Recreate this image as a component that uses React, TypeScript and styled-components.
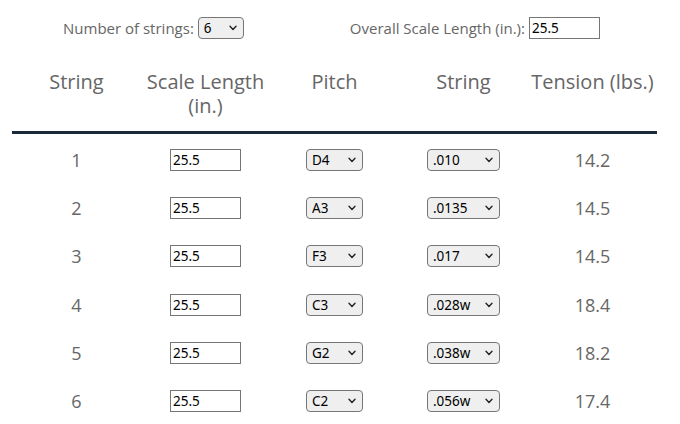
import React, { useState } from "react";
import styled, { createGlobalStyle } from "styled-components";

const Global = createGlobalStyle`
  html, body { margin: 0; padding: 0; background: #fff; }
  body { font-family: "Open Sans", "Noto Sans", sans-serif; color: #555; }
`;

const Page = styled.div`
  width: 680px;
  height: 424px;
  overflow: hidden;
  padding-top: 16px;
  box-sizing: border-box;
`;

const Controls = styled.div`
  display: flex;
  align-items: center;
  height: 24px;
  padding-left: 63px;
`;

const Field = styled.label<{ $gap?: number }>`
  display: flex;
  align-items: center;
  gap: 4px;
  font-size: 15px;
  color: #666;
  margin-right: ${(p) => p.$gap ?? 0}px;
`;

const SelectWrap = styled.span<{ $w: number }>`
  position: relative;
  display: inline-flex;
  width: ${(p) => p.$w}px;
  height: 22px;
`;

const NativeSelect = styled.select`
  appearance: none;
  -webkit-appearance: none;
  width: 100%;
  height: 100%;
  font-family: "Noto Sans", "Open Sans", sans-serif;
  font-size: 13.5px;
  color: #000;
  background: #efefef;
  border: 1px solid #767676;
  border-radius: 4px;
  padding: 0 0 0 5px;
  box-sizing: border-box;
  outline: none;
`;

const Chevron = styled.svg`
  position: absolute;
  right: 7px;
  top: 8px;
  width: 8px;
  height: 6px;
  pointer-events: none;
`;

const TextInput = styled.input<{ $w: number }>`
  width: ${(p) => p.$w}px;
  height: 22px;
  font-family: "Noto Sans", "Open Sans", sans-serif;
  font-size: 13.5px;
  color: #000;
  border: 1px solid #767676;
  border-radius: 0;
  padding: 0 2px;
  box-sizing: border-box;
  background: #fff;
  outline: none;
`;

const Table = styled.div`
  margin: 30px 0 0 12px;
  width: 645px;
`;

const HeadRow = styled.div`
  display: grid;
  grid-template-columns: repeat(5, 129px);
  border-bottom: 3px solid #1b2a3b;
  padding-bottom: 13px;
`;

const HeadCell = styled.div`
  text-align: center;
  font-size: 20px;
  line-height: 24px;
  color: #666;
`;

const Body = styled.div`
  padding-top: 2px;
`;

const Row = styled.div`
  display: grid;
  grid-template-columns: repeat(5, 129px);
  height: 48.2px;
  align-items: center;
  justify-items: center;
`;

const Num = styled.div`
  font-size: 18px;
  color: #666;
`;

function Dropdown({ w, value, options }: { w: number; value: string; options: string[] }) {
  return (
    <SelectWrap $w={w}>
      <NativeSelect defaultValue={value}>
        {options.map((o) => (
          <option key={o}>{o}</option>
        ))}
      </NativeSelect>
      <Chevron viewBox="0 0 8 6">
        <path d="M1 1.2 L4 4.4 L7 1.2" fill="none" stroke="#222" strokeWidth="1.4" strokeLinecap="round" strokeLinejoin="round" />
      </Chevron>
    </SelectWrap>
  );
}

const pitchOpts = ["D4", "A3", "F3", "C3", "G2", "C2", "E4", "B3", "G3", "D3", "A2", "E2"];
const gaugeOpts = [".010", ".0135", ".017", ".028w", ".038w", ".056w", ".009", ".011", ".046w"];

const data = [
  { p: "D4", g: ".010", t: "14.2" },
  { p: "A3", g: ".0135", t: "14.5" },
  { p: "F3", g: ".017", t: "14.5" },
  { p: "C3", g: ".028w", t: "18.4" },
  { p: "G2", g: ".038w", t: "18.2" },
  { p: "C2", g: ".056w", t: "17.4" },
];

export default function App() {
  const [rows] = useState(data);
  return (
    <Page>
      <Global />
      <Controls>
        <Field $gap={106}>
          Number of strings:
          <Dropdown w={46} value="6" options={["4", "5", "6", "7", "8"]} />
        </Field>
        <Field>
          Overall Scale Length (in.):
          <TextInput $w={71} defaultValue="25.5" />
        </Field>
      </Controls>
      <Table>
        <HeadRow>
          <HeadCell>String</HeadCell>
          <HeadCell>
            Scale Length
            <br />
            (in.)
          </HeadCell>
          <HeadCell>Pitch</HeadCell>
          <HeadCell>String</HeadCell>
          <HeadCell>Tension (lbs.)</HeadCell>
        </HeadRow>
        <Body>
          {rows.map((r, i) => (
            <Row key={i}>
              <Num>{i + 1}</Num>
              <TextInput $w={71} defaultValue="25.5" />
              <Dropdown w={57} value={r.p} options={pitchOpts} />
              <Dropdown w={73} value={r.g} options={gaugeOpts} />
              <Num>{r.t}</Num>
            </Row>
          ))}
        </Body>
      </Table>
    </Page>
  );
}
